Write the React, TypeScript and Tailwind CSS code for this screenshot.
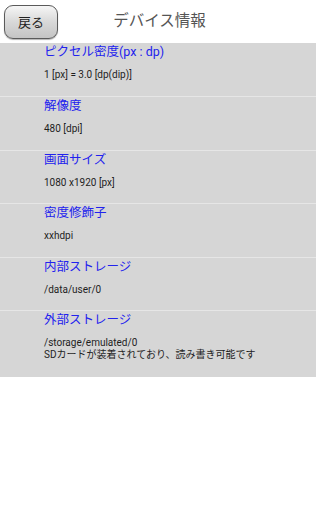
import React from "react";

const rows: { title: string; values: string[]; h: string }[] = [
  { title: "ピクセル密度(px : dp)", values: ["1 [px] = 3.0 [dp(dip)]"], h: "h-[54px] border-b" },
  { title: "解像度", values: ["480 [dpi]"], h: "h-[54px] border-b" },
  { title: "画面サイズ", values: ["1080 x1920 [px]"], h: "h-[53px] border-b" },
  { title: "密度修飾子", values: ["xxhdpi"], h: "h-[54px] border-b" },
  { title: "内部ストレージ", values: ["/data/user/0"], h: "h-[53px] border-b" },
  {
    title: "外部ストレージ",
    values: ["/storage/emulated/0", "SDカードが装着されており、読み書き可能です"],
    h: "h-[66px]",
  },
];

export default function App() {
  return (
    <div
      className="w-[316px] h-[512px] bg-white flex flex-col"
      style={{ fontFamily: "Roboto, 'Noto Sans CJK JP', sans-serif" }}
    >
      <div className="h-[43px] flex items-start relative">
        <button className="mt-[5px] ml-[4px] w-[54px] h-[34px] rounded-[9px] border border-[#5a5a5a] bg-gradient-to-b from-[#f6f6f6] via-[#d8d8d8] to-[#c4c4c4] shadow-[0_1px_1px_rgba(0,0,0,0.3)] flex items-center justify-center text-[13px] text-[#222] leading-none">
          戻る
        </button>
        <div className="absolute left-0 right-0 top-0 h-[43px] flex items-center justify-center pointer-events-none">
          <span className="text-[15.5px] text-[#555] pl-[3px]">デバイス情報</span>
        </div>
      </div>
      <div className="bg-[#d6d6d6] flex flex-col">
        {rows.map((r, i) => (
          <div key={i} className={`${r.h} border-[#e6e6e6] pl-[44px] pt-[1px]`}>
            <div className="text-[12.5px] leading-[16px] text-[#2222ee]">{r.title}</div>
            <div className="mt-[9px] text-[10px] leading-[11.5px] text-[#1e1e1e]">
              {r.values.map((v, j) => (
                <div key={j}>{v}</div>
              ))}
            </div>
          </div>
        ))}
      </div>
    </div>
  );
}
